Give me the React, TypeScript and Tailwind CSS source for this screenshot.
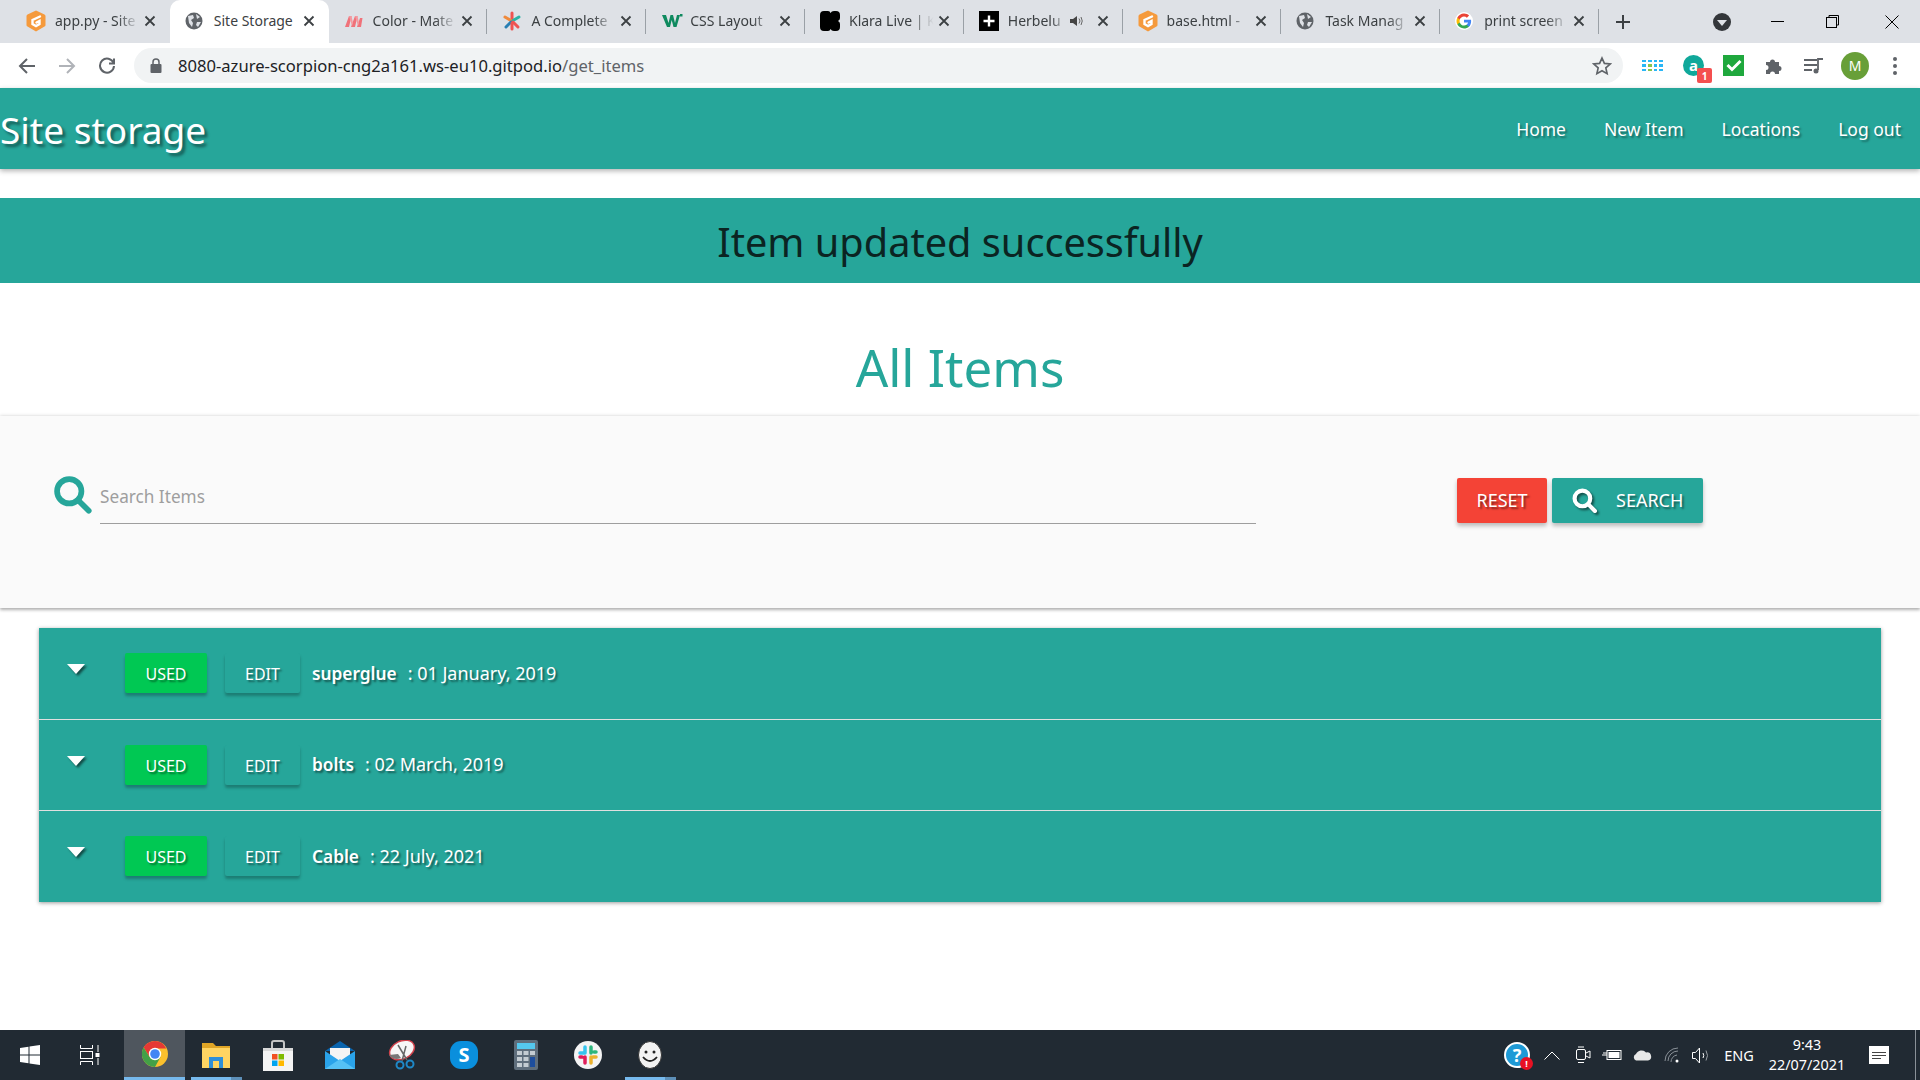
import React from "react";

const G = () => (
  <svg width="20" height="22" viewBox="0 0 20 22"><path d="M10 0.500 L18.500 4.500 Q19.500 5 19.500 6 V15 Q19.500 16 18.500 16.500 L10 21.500 L1.500 16.500 Q0.500 16 0.500 15 V6 Q0.500 5 1.500 4.500 Z" fill="#f59a3c" /><path d="M14 6.500 L6.500 10 V14 L10 16 L13.500 14 V11 L10.500 12.500" fill="none" stroke="#fff" strokeWidth="2.400" strokeLinecap="round" /></svg>
);
const Globe = () => (
  <svg width="18" height="18" viewBox="0 0 18 18"><circle cx="9" cy="9" r="8.500" fill="#5f6368" /><path d="M3 4 L8 3 L9 6 L6 8 L8 11 L7 15 L4 11 Z M11 2 L15 5 L12 7 Z M12 10 L16 10 L13 15 L11 13 Z" fill="#dee1e6" /></svg>
);
const Color = () => (
  <svg width="20" height="14" viewBox="0 0 20 14"><path d="M1 13 L5 2 H7.500 L5 13 Z M7 13 L11 2 H13.500 L11 13 Z M13 13 L16 4 H18.500 L17 13 Z" fill="#f0727a" /><path d="M5 2 H7.500 L9 9 L8 12 Z M11 2 H13.500 L15 9 L14 12 Z" fill="#f49aa0" /></svg>
);
const Star = () => (
  <svg width="20" height="20" viewBox="0 0 20 20" strokeWidth="3" strokeLinecap="round"><path d="M10 2 V9" stroke="#ef5350" /><path d="M3 6 L9 9.500" stroke="#ef8a3c" /><path d="M17 6 L11 9.500" stroke="#2ab3a6" /><path d="M4 16 L9 11" stroke="#2a7fb3" /><path d="M16 16 L11 11" stroke="#ef5350" /><path d="M10 12 V18" stroke="#ef5350" /></svg>
);
const W3 = () => (
  <svg width="22" height="16" viewBox="0 0 22 16"><path d="M1 2 H5 L7.500 10 L9.500 2 H12 L14 10 L16 2 H19 L15.500 14 H12.500 L10.700 7 L9 14 H6 Z" fill="#0f8a5f" /><rect x="19" y="1" width="2.500" height="2.500" fill="#0f8a5f" /></svg>
);
const Klara = () => (
  <svg width="20" height="20" viewBox="0 0 20 20"><path d="M4 0 H8 Q10 0 10.500 2 Q11.500 0 14 0 H16 Q20 0 20 4 V7 Q20 9 18 10 Q20 11 20 13 V16 Q20 20 16 20 H14 Q11.500 20 10.500 18 Q10 20 8 20 H4 Q0 20 0 16 V4 Q0 0 4 0 Z" fill="#000" /></svg>
);
const Herbelu = () => (
  <div className="flex h-5 w-5 items-center justify-center bg-black">
    <svg width="14" height="14" viewBox="0 0 14 14"><path d="M7 1.500 V12.500 M1.500 7 H12.500" stroke="#fff" strokeWidth="2.400" /></svg>
  </div>
);
const GoogleG = ({ s = 18 }: { s?: number }) => (
  <svg width={s} height={s} viewBox="0 0 48 48"><circle cx="24" cy="24" r="24" fill="#fff" /><path d="M43 24.500c0-1.400-.1-2.700-.4-4H24v7.600h10.800c-.5 2.500-1.900 4.600-4 6v5h6.500C41 35.600 43 30.500 43 24.500z" fill="#4285f4" /><path d="M24 44c5.400 0 9.900-1.800 13.300-4.900l-6.500-5c-1.800 1.200-4.100 1.900-6.800 1.900-5.200 0-9.600-3.500-11.200-8.300H6.100v5.200C9.400 39.500 16.200 44 24 44z" fill="#34a853" /><path d="M12.800 27.700c-.8-2.400-.8-5 0-7.400V15H6.100c-2.800 5.600-2.800 12.300 0 17.900z" fill="#fbbc05" /><path d="M24 12c3 0 5.600 1 7.700 3l5.800-5.800C33.900 5.900 29.400 4 24 4 16.200 4 9.400 8.500 6.100 15l6.700 5.300C14.400 15.500 18.800 12 24 12z" fill="#ea4335" /></svg>
);
const X = () => (
  <svg width="12" height="12" viewBox="0 0 12 12"><path d="M1.500 1.500 L10.500 10.500 M10.500 1.500 L1.500 10.500" stroke="#3c4043" strokeWidth="1.800" /></svg>
);
const Speaker = () => (
  <svg width="14" height="12" viewBox="0 0 14 12" className="mr-[13px]"><path d="M0 4 H3 L7 1 V11 L3 8 H0 Z" fill="#444" /><path d="M9 3.500 Q11 6 9 8.500 M11 2 Q13.500 6 11 10" stroke="#666" fill="none" /></svg>
);

const tabs: { icon: React.ReactNode; title: string; active?: boolean; speaker?: boolean; sep?: boolean }[] = [
  { icon: <G />, title: "app.py - Site" },
  { icon: <Globe />, title: "Site Storage", active: true },
  { icon: <Color />, title: "Color - Mate", sep: true },
  { icon: <Star />, title: "A Complete", sep: true },
  { icon: <W3 />, title: "CSS Layout", sep: true },
  { icon: <Klara />, title: "Klara Live | K", sep: true },
  { icon: <Herbelu />, title: "Herbelu", speaker: true, sep: true },
  { icon: <G />, title: "base.html - ", sep: true },
  { icon: <Globe />, title: "Task Manag", sep: true },
  { icon: <GoogleG />, title: "print screen", sep: true },
];

const Tab = ({ t }: { t: (typeof tabs)[number] }) => (
  <div className={`flex h-[43px] w-[158.800px] shrink-0 items-center pb-[1px] pl-[15px] pr-[14px] ${t.active ? "rounded-t-[10px] bg-white" : ""} ${t.sep ? "relative after:absolute after:right-0 after:top-[9px] after:h-[25px] after:w-[1px] after:bg-[#9aa0a6]" : ""}`}>
    <div className="flex w-[29px] shrink-0 items-center">{t.icon}</div>
    <div className={`-mt-[1px] min-w-0 flex-1 whitespace-nowrap text-[14px] text-[#3c4043] ${t.active ? "" : "[mask-image:linear-gradient(to_right,black_70%,transparent_95%)]"}`}>{t.title}</div>
    {t.speaker && <Speaker />}
    <X />
  </div>
);

const Search = ({ s, c, sw = 3 }: { s: number; c: string; sw?: number }) => (
  <svg width={s} height={s} viewBox="0 0 24 24" fill="none"><circle cx="10" cy="10" r="7.500" stroke={c} strokeWidth={sw} /><path d="M15.500 15.500 L22 22" stroke={c} strokeWidth={sw} strokeLinecap="round" /></svg>
);

const rows = [
  { name: "superglue", date: ": 01 January, 2019", h: "h-[92px]", mt: "mt-[7px]" },
  { name: "bolts", date: ": 02 March, 2019", h: "h-[91px]", mt: "mt-[6px]" },
  { name: "Cable", date: ": 22 July, 2021", h: "h-[91px]", mt: "mt-[7px]" },
];

const Row = ({ r, last }: { r: (typeof rows)[number]; last?: boolean }) => (
  <div className={`flex items-start pl-[27px] pt-[25px] ${r.h} ${last ? "" : "border-b border-[#e0e0e0]"}`}>
    <svg width="20" height="12" viewBox="0 0 20 12" className="mt-[10px] [filter:drop-shadow(2px_2px_1px_rgba(0,0,0,0.55))]"><path d="M1 1 H19 L10 11 Z" fill="#fff" /></svg>
    <button className="ml-[39px] h-[40px] w-[82px] rounded-[2px] bg-[#00c853] pt-[1px] text-[16px] text-white shadow-[0_3px_3px_rgba(0,0,0,0.25)] [text-shadow:2px_2px_2px_rgba(0,0,0,0.45)]">USED</button>
    <button className="ml-[18px] h-[40px] w-[75px] rounded-[2px] bg-[#26a69a] pt-[1px] text-[16px] text-white shadow-[0_3px_3px_rgba(0,0,0,0.25)] [text-shadow:2px_2px_2px_rgba(0,0,0,0.45)]">EDIT</button>
    <div className={`ml-[12px] text-[18px] leading-[27px] text-white [text-shadow:2px_2px_2px_rgba(0,0,0,0.45)] ${r.mt}`}>
      <span className="text-[17.300px] font-semibold">{r.name}</span>
      <span className="ml-[11px]">{r.date}</span>
    </div>
  </div>
);

const Win = () => (
  <svg width="20" height="20" viewBox="0 0 20 20" fill="#fff"><path d="M0 3 L8.500 1.800 V9.500 H0 Z M9.500 1.600 L20 0 V9.500 H9.500 Z M0 10.500 H8.500 V18.200 L0 17 Z M9.500 10.500 H20 V20 L9.500 18.400 Z" /></svg>
);
const TaskView = () => (
  <svg width="20" height="20" viewBox="0 0 20 20" fill="none" stroke="#fff"><path d="M0.500 0 V3.500 H12.500 V0 M0.500 20 V16.500 H12.500 V20" /><rect x="0.500" y="6.500" width="12" height="7" /><path d="M18 0 V7 M18 13 V20" /><rect x="15.500" y="8" width="4" height="4" fill="#fff" stroke="none" /></svg>
);
const Chrome = () => (
  <svg width="26" height="26" viewBox="0 0 26 26"><circle cx="13" cy="13" r="13" fill="#fbc02d" /><path d="M13 0 A13 13 0 0 0 1.700 6.500 L7.500 16 L13 7.500 H24.300 A13 13 0 0 0 13 0 Z" fill="#e53935" /><path d="M1.700 6.500 A13 13 0 0 0 13 26 L18.500 16 L7.500 16 Z" fill="#43a047" /><circle cx="13" cy="13" r="6.200" fill="#fff" /><circle cx="13" cy="13" r="4.800" fill="#4285f4" /></svg>
);
const Folder = () => (
  <svg width="28" height="26" viewBox="0 0 28 26"><path d="M0 1 H11 L14 4 H28 V25 H0 Z" fill="#e0a526" /><rect x="0" y="6" width="28" height="20" fill="#ffd462" /><path d="M7 15 H21 V26 H17 V19 H11 V26 H7 Z" fill="#2f8fd8" /></svg>
);
const Store = () => (
  <svg width="30" height="31" viewBox="0 0 30 31"><path d="M9 9 V3 Q9 1 11 1 H19 Q21 1 21 3 V9" fill="none" stroke="#c5c5c5" strokeWidth="2" /><rect x="0" y="8" width="30" height="23" fill="#f4f4f4" /><rect x="0" y="8" width="30" height="3" fill="#d8d8d8" /><rect x="9" y="14" width="5.500" height="5.500" fill="#f25022" /><rect x="15.500" y="14" width="5.500" height="5.500" fill="#7fba00" /><rect x="9" y="20.500" width="5.500" height="5.500" fill="#00a4ef" /><rect x="15.500" y="20.500" width="5.500" height="5.500" fill="#ffb900" /></svg>
);
const Mail = () => (
  <svg width="30" height="28" viewBox="0 0 30 28"><path d="M0 10 L15 0 L30 10 Z" fill="#0a64ad" /><path d="M5 7 H25 V16 L15 21 L5 16 Z" fill="#f4f4f4" /><path d="M0 10 L15 20 L30 10 V28 H0 Z" fill="#2aa3ea" /><path d="M0 28 L15 18 L30 28 Z" fill="#55c1f5" /></svg>
);
const Snip = () => (
  <svg width="28" height="30" viewBox="0 0 28 30"><ellipse cx="14" cy="10" rx="13" ry="9" transform="rotate(-25 14 10)" fill="#f6f6f6" stroke="#d0404a" strokeWidth="1.500" /><path d="M1 15 Q6 21 13 18 L10 14 Z" fill="#777" /><path d="M10 5 L19 20 M18 6 L14 21" stroke="#666" strokeWidth="1.500" /><circle cx="12" cy="25" r="3.500" fill="none" stroke="#1e88c7" strokeWidth="2" /><circle cx="22" cy="24" r="3.500" fill="none" stroke="#1e88c7" strokeWidth="2" /></svg>
);
const Skype = () => (
  <div className="flex h-[28px] w-[28px] items-center justify-center rounded-[11px] bg-[#0a8fdd] text-[20px] font-bold text-white">S</div>
);
const Calc = () => (
  <svg width="24" height="30" viewBox="0 0 24 30"><rect width="24" height="30" rx="2" fill="#5f6e7c" /><rect x="3" y="3" width="18" height="6" fill="#55c8ee" /><path d="M3 11 H8 V15 H3 Z M9.500 11 H14.500 V15 H9.500 Z M16 11 H21 V15 H16 Z M3 17 H8 V21 H3 Z M9.500 17 H14.500 V21 H9.500 Z M3 23 H8 V27 H3 Z M9.500 23 H14.500 V27 H9.500 Z" fill="#c4ccd2" /><rect x="16" y="17" width="5" height="10" fill="#1d4e9e" /></svg>
);
const Slack = () => (
  <svg width="28" height="28" viewBox="0 0 28 28"><circle cx="14" cy="14" r="14" fill="#f4f4f4" /><g strokeWidth="3.500" strokeLinecap="round"><path d="M11 6 V12 M6 12 H9" stroke="#36c5f0" /><path d="M17 6 V12 M22 11 H20" stroke="#2eb67d" /><path d="M17 22 V16 M22 16 H19" stroke="#ecb22e" /><path d="M11 22 V16 M6 16 H8" stroke="#e01e5a" /></g></svg>
);
const Smile = () => (
  <svg width="24" height="28" viewBox="0 0 24 28"><ellipse cx="12" cy="14" rx="11.500" ry="13.500" fill="#f2f2f2" stroke="#333" /><circle cx="8" cy="11" r="1.500" fill="#222" /><circle cx="16" cy="11" r="1.500" fill="#222" /><path d="M5 16 Q12 24 19 16" stroke="#222" strokeWidth="1.800" fill="none" /></svg>
);

const apps: { icon: React.ReactNode; w: string; bar?: boolean; active?: boolean }[] = [
  { icon: <Chrome />, w: "w-[61px]", active: true },
  { icon: <Folder />, w: "w-[62px]", bar: true },
  { icon: <Store />, w: "w-[62px]" },
  { icon: <Mail />, w: "w-[62px]" },
  { icon: <Snip />, w: "w-[62px]" },
  { icon: <Skype />, w: "w-[62px]" },
  { icon: <Calc />, w: "w-[62px]" },
  { icon: <Slack />, w: "w-[62px]" },
  { icon: <Smile />, w: "w-[62px]", bar: true },
];

const Cell = ({ w, children }: { w: string; children: React.ReactNode }) => (
  <div className={`flex h-full shrink-0 items-center justify-center ${w}`}>{children}</div>
);

const Tray = () => (
  <div className="flex h-full items-center text-white">
    <Cell w="w-[36px]">
      <div className="relative flex h-[26px] w-[26px] items-center justify-center rounded-full border-2 border-white bg-[#1e9ad6] text-[18px] font-bold leading-none">
        ?
        <span className="absolute -bottom-[4px] -right-[5px] flex h-[13px] w-[13px] items-center justify-center rounded-full bg-[#e81123] text-[9px] font-bold">!</span>
      </div>
    </Cell>
    <Cell w="w-[34px]"><svg width="16" height="9" viewBox="0 0 16 9"><path d="M0.500 8.500 L8 1 L15.500 8.500" fill="none" stroke="#fff" /></svg></Cell>
    <Cell w="w-[28px]"><svg width="15" height="18" viewBox="0 0 15 18" fill="none" stroke="#fff"><rect x="0.500" y="3.500" width="9" height="10" rx="1.500" /><path d="M10 7 L14 5 V12 L10 10 M2 1 H8 M2 16.500 H8" /></svg></Cell>
    <Cell w="w-[30px]"><svg width="20" height="12" viewBox="0 0 20 12"><rect x="5" y="1.500" width="14" height="9" fill="none" stroke="#fff" /><rect x="6.500" y="3" width="11" height="6" fill="#fff" /><path d="M0 6 H5 M2 3 V5 M4 3 V5" stroke="#fff" /></svg></Cell>
    <Cell w="w-[30px]"><svg width="20" height="12" viewBox="0 0 20 12"><path d="M4 11.500 A3.500 3.500 0 0 1 4 5 A6 6 0 0 1 14 3.500 A4 4 0 0 1 16 11.500 Z" fill="#e8e8e8" /></svg></Cell>
    <Cell w="w-[30px]"><svg width="16" height="16" viewBox="0 0 16 16" fill="none" stroke="#8a9198"><path d="M1 14 A13 13 0 0 1 14 1 M4 14 A10 10 0 0 1 14 4 M7 15 A7 7 0 0 1 13 8" /><circle cx="13" cy="14" r="1.500" fill="#fff" stroke="none" /></svg></Cell>
    <Cell w="w-[30px]"><svg width="20" height="17" viewBox="0 0 20 17" fill="none" stroke="#fff"><path d="M0.500 5.500 H3.500 L7.500 1 V16 L3.500 11.500 H0.500 Z" /><path d="M11 6 Q12.500 8.500 11 11" /><path d="M14 3.500 Q17 8.500 14 13.500" stroke="#9aa0a6" /></svg></Cell>
    <Cell w="w-[44px]"><span className="text-[14.500px] leading-none">ENG</span></Cell>
    <Cell w="w-[92px]">
      <div className="text-center text-[14.400px] leading-[20px]">
        <div>9:43</div>
        <div>22/07/2021</div>
      </div>
    </Cell>
    <Cell w="w-[52px]">
      <div className="flex h-[18px] w-[20px] flex-col justify-center gap-[2px] bg-white px-[3px]">
        <div className="h-[1px] bg-[#444]" /><div className="h-[1px] bg-[#444]" /><div className="h-[1px] w-[9px] bg-[#444]" />
      </div>
    </Cell>
    <div className="ml-[10px] h-full w-[5px] border-l border-[#8a9198]" />
  </div>
);

export default function App() {
  return (
    <div className="flex h-screen w-full flex-col overflow-hidden bg-white font-['Noto_Sans',sans-serif]">
      <header className="flex h-[43px] shrink-0 items-center bg-[#dee1e6] pl-[11px]">
        {tabs.map((t) => <Tab key={t.title} t={t} />)}
        <svg width="16" height="16" viewBox="0 0 16 16" className="ml-[16px]"><path d="M8 1 V15 M1 8 H15" stroke="#3c4043" strokeWidth="2" /></svg>
        <div className="ml-[82px] flex h-[18px] w-[18px] items-center justify-center rounded-full bg-[#33363a]">
          <div className="mt-[2px] h-0 w-0 border-x-[5px] border-t-[6px] border-x-transparent border-t-[#dee1e6]" />
        </div>
        <div className="ml-[40px] h-[1px] w-[13px] bg-black" />
        <svg width="13" height="13" viewBox="0 0 13 13" fill="none" stroke="#000" className="ml-[42px]"><rect x="0.500" y="2.500" width="10" height="10" /><path d="M3 2.500 V0.500 H12.500 V10 H10.500" /></svg>
        <svg width="14" height="14" viewBox="0 0 14 14" stroke="#000" className="ml-[46px]"><path d="M0.500 0.500 L13.500 13.500 M13.500 0.500 L0.500 13.500" /></svg>
      </header>

      <div className="flex h-[45px] shrink-0 items-center bg-white">
        <svg width="18" height="18" viewBox="0 0 18 18" fill="none" stroke="#5f6368" strokeWidth="2" className="ml-[18px]"><path d="M17 9 H2 M9 2 L2 9 L9 16" /></svg>
        <svg width="18" height="18" viewBox="0 0 18 18" fill="none" stroke="#b0b3b8" strokeWidth="2" className="ml-[22px]"><path d="M1 9 H16 M9 2 L16 9 L9 16" /></svg>
        <svg width="18" height="18" viewBox="0 0 18 18" fill="none" stroke="#5f6368" strokeWidth="2" className="ml-[22px]"><path d="M15.500 6 A7 7 0 1 0 16 9" /><path d="M16 1.500 V6.500 H11" /></svg>
        <div className="ml-[18px] flex h-[35px] w-[1489px] items-center rounded-full bg-[#f1f3f4] pl-[16px] pr-[11px]">
          <svg width="12" height="15" viewBox="0 0 12 15" className="mr-[16px]"><path d="M3 6 V4 A3 3 0 0 1 9 4 V6" fill="none" stroke="#5f6368" strokeWidth="1.500" /><rect x="0.500" y="6" width="11" height="9" rx="1" fill="#5f6368" /></svg>
          <span className="flex-1 pt-[1px] text-[16.600px] text-[#202124]">8080-azure-scorpion-cng2a161.ws-eu10.gitpod.io<span className="text-[#5f6368]">/get_items</span></span>
          <svg width="20" height="20" viewBox="0 0 24 24" fill="none" stroke="#5f6368" strokeWidth="2"><path d="M12 2.500 L14.900 8.900 L21.800 9.600 L16.600 14.300 L18.100 21.200 L12 17.600 L5.900 21.200 L7.400 14.300 L2.200 9.600 L9.100 8.900 Z" /></svg>
        </div>
        <div className="ml-[19px] grid w-[21px] grid-cols-4 gap-[2px]">
          {Array.from({ length: 12 }).map((_, i) => <div key={i} className={`h-[2.500px] ${i === 5 || i === 9 ? "bg-[#8bc34a]" : "bg-[#29b6f6]"}`} />)}
        </div>
        <div className="relative ml-[20px] flex h-[21px] w-[21px] items-center justify-center rounded-full bg-[#10a89a] text-[15px] font-bold leading-none text-white">
          a
          <span className="absolute -bottom-[7px] -right-[8px] flex h-[15px] w-[15px] items-center justify-center rounded-[2px] bg-[#f44f4f] text-[10px] font-bold">1</span>
        </div>
        <div className="ml-[19px] flex h-[21px] w-[21px] items-center justify-center bg-[#1fa83d]">
          <svg width="16" height="13" viewBox="0 0 16 13" fill="none" stroke="#fff" strokeWidth="3"><path d="M1.500 6 L6 10.500 L14.500 2" /></svg>
        </div>
        <svg width="18" height="18" viewBox="0 0 18 18" fill="#5f6368" className="ml-[21px]"><path d="M1 5 H5 A2.500 2.500 0 1 1 10 5 H14 V9 A2.500 2.500 0 1 1 14 14 V17 H10 A2.500 2.500 0 1 0 5 17 H1 V13 A2.500 2.500 0 1 0 1 8 Z" /></svg>
        <svg width="20" height="16" viewBox="0 0 20 16" fill="none" stroke="#5f6368" strokeWidth="1.800" className="ml-[21px]"><path d="M0 2 H13 M0 7 H13 M0 12 H8 M14 12 V1 H19" /><circle cx="12" cy="13" r="2.500" fill="#5f6368" stroke="none" /></svg>
        <div className="ml-[17px] flex h-[28px] w-[28px] items-center justify-center rounded-full bg-[#689f38] text-[14px] text-white">M</div>
        <div className="ml-[24px] flex flex-col gap-[3px]">
          <div className="h-[4px] w-[4px] rounded-full bg-[#5f6368]" /><div className="h-[4px] w-[4px] rounded-full bg-[#5f6368]" /><div className="h-[4px] w-[4px] rounded-full bg-[#5f6368]" />
        </div>
      </div>

      <main className="flex min-h-0 flex-1 flex-col">
        <nav className="flex h-[81px] shrink-0 items-center justify-between bg-[#26a69a] shadow-[0_2px_5px_rgba(0,0,0,0.3)] [text-shadow:2px_2px_2px_rgba(0,0,0,0.35)]">
          <a className="pt-[2px] text-[37px] leading-[1] text-white [text-shadow:3px_3px_3px_rgba(0,0,0,0.45)]">Site storage</a>
          <div className="flex gap-[38px] pr-[19px] pt-[2px] text-[17.500px] text-white">
            <a>Home</a><a>New Item</a><a>Locations</a><a>Log out</a>
          </div>
        </nav>

        <div className="mt-[29px] flex h-[85px] shrink-0 items-center justify-center bg-[#26a69a] pt-[4px] text-[39.700px] text-[#0b2422]">Item updated successfully</div>

        <h1 className="flex h-[133px] shrink-0 items-center justify-center pt-[36px] text-[51px] text-[#26a69a]">All Items</h1>

        <section className="flex h-[192px] shrink-0 items-start bg-[#fafafa] pl-[53px] pt-[59px] shadow-[0_2px_3px_rgba(0,0,0,0.3),0_-1px_3px_rgba(0,0,0,0.1)]">
          <Search s={39} c="#26a69a" sw={3.500} />
          <div className="ml-[8px] mt-[2px] h-[47px] w-[1156px] border-b border-[#9e9e9e] pt-[6px] text-[17.200px] leading-[27px] text-[#9e9e9e]">Search Items</div>
          <button className="ml-[201px] mt-[3px] h-[45px] w-[90px] rounded-[2px] bg-[#f44336] text-[18px] text-white shadow-[0_3px_4px_rgba(0,0,0,0.25)] [text-shadow:2px_2px_2px_rgba(0,0,0,0.45)]">RESET</button>
          <button className="ml-[5px] mt-[3px] flex h-[45px] w-[151px] items-center rounded-[2px] bg-[#26a69a] pl-[20px] text-[18px] text-white shadow-[0_3px_4px_rgba(0,0,0,0.25)] [text-shadow:2px_2px_2px_rgba(0,0,0,0.45)]">
            <span className="[filter:drop-shadow(2px_2px_1px_rgba(0,0,0,0.5))]"><Search s={25} c="#fff" sw={4} /></span>
            <span className="ml-[19px]">SEARCH</span>
          </button>
        </section>

        <div className="mx-[39px] mt-[20px] shrink-0 bg-[#26a69a] shadow-[0_1px_4px_rgba(0,0,0,0.4)]">
          {rows.map((r, i) => <Row key={r.name} r={r} last={i === 2} />)}
        </div>
      </main>

      <footer className="flex h-[50px] shrink-0 items-center justify-between bg-[#212a33]">
        <div className="flex h-full items-center">
          <div className="ml-[20px] w-[60px]"><Win /></div>
          <div className="w-[44px]"><TaskView /></div>
          {apps.map((a, i) => (
            <div key={i} className={`relative flex h-full items-center justify-center ${a.w} ${a.active ? "border-b-[3px] border-[#76b9ed] bg-[#4f565e]" : ""}`}>
              {a.icon}
              {a.bar && (
                <div className="absolute bottom-0 left-[6px] flex h-[3px]">
                  <div className="w-[40px] bg-[#76b9ed]" />
                  <div className="w-[11px] bg-[#5d8fb8]" />
                </div>
              )}
            </div>
          ))}
        </div>
        <Tray />
      </footer>
    </div>
  );
}
